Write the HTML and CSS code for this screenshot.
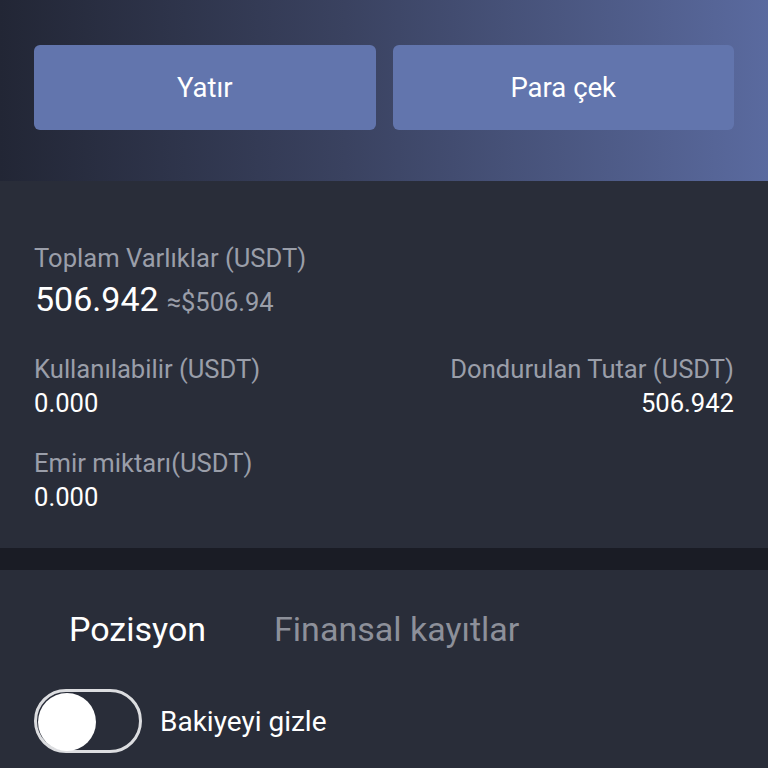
FILE: index.html
```html
<!DOCTYPE html>
<html lang="tr">
<head>
    <meta charset="UTF-8">
    <meta name="viewport" content="width=device-width, initial-scale=1.0">
    <title>Varlıklar</title>
    <link rel="stylesheet" href="styles.css">
</head>
<body>
    <div class="header">
        <div class="actions">
            <button class="action-btn">Yatır</button>
            <button class="action-btn">Para çek</button>
        </div>
    </div>

    <div class="assets">
        <div class="label">Toplam Varlıklar (USDT)</div>
        <div class="total">
            <span class="total-value">506.942</span>
            <span class="total-fiat">≈$506.94</span>
        </div>

        <div class="row">
            <div class="cell">
                <div class="label">Kullanılabilir (USDT)</div>
                <div class="value">0.000</div>
            </div>
            <div class="cell right">
                <div class="label">Dondurulan Tutar (USDT)</div>
                <div class="value">506.942</div>
            </div>
        </div>

        <div class="row">
            <div class="cell">
                <div class="label">Emir miktarı(USDT)</div>
                <div class="value">0.000</div>
            </div>
        </div>
    </div>

    <div class="divider"></div>

    <div class="records">
        <div class="tabs">
            <div class="tab active">Pozisyon</div>
            <div class="tab">Finansal kayıtlar</div>
        </div>
        <div class="toggle-row">
            <div class="switch"><div class="knob"></div></div>
            <span class="toggle-label">Bakiyeyi gizle</span>
        </div>
    </div>
</body>
</html>
```

FILE: styles.css
```css
body {
    margin: 0;
    font-family: Roboto, "Liberation Sans", sans-serif;
    background-color: #292d39;
    color: white;
}
.header {
    height: 181px;
    box-sizing: border-box;
    padding: 45px 34px 0 34px;
    background: linear-gradient(90deg, #222635 0%, #3a4260 45%, #5a6a9f 100%);
}
.actions {
    display: flex;
    gap: 17px;
}
.action-btn {
    flex: 1;
    height: 85px;
    border: none;
    border-radius: 6px;
    background-color: #6275ad;
    color: white;
    font-family: inherit;
    font-size: 27.5px;
}
.assets {
    height: 367px;
    box-sizing: border-box;
    padding: 60px 34px 0 35px;
}
.label {
    font-size: 25.6px;
    line-height: 34px;
    color: #9a9ea9;
    margin-left: -1px;
}
.total {
    display: flex;
    align-items: baseline;
    gap: 8px;
    line-height: 48px;
}
.total-value {
    font-size: 34px;
}
.total-fiat {
    font-size: 25.5px;
    color: #9a9ea9;
}
.row {
    display: flex;
    justify-content: space-between;
    margin-top: 26px;
}
.row + .row {
    margin-top: 26px;
}
.cell.right {
    text-align: right;
}
.value {
    font-size: 25.6px;
    line-height: 34px;
    margin-left: -1px;
}
.divider {
    height: 22px;
    background-color: #1a1c25;
}
.records {
    padding: 36px 34px 0 34px;
}
.tabs {
    display: flex;
    gap: 68px;
    padding-left: 35px;
}
.tab {
    font-size: 34px;
    line-height: 46px;
    color: #8d909a;
}
.tab.active {
    color: white;
}
.toggle-row {
    display: flex;
    align-items: center;
    gap: 18px;
    margin-top: 37px;
}
.switch {
    width: 108px;
    height: 64px;
    box-sizing: border-box;
    border: 3px solid #dcdde0;
    border-radius: 32px;
    padding: 1px;
}
.knob {
    width: 58px;
    height: 58px;
    border-radius: 50%;
    background: white;
}
.toggle-label {
    font-size: 28px;
}
```
